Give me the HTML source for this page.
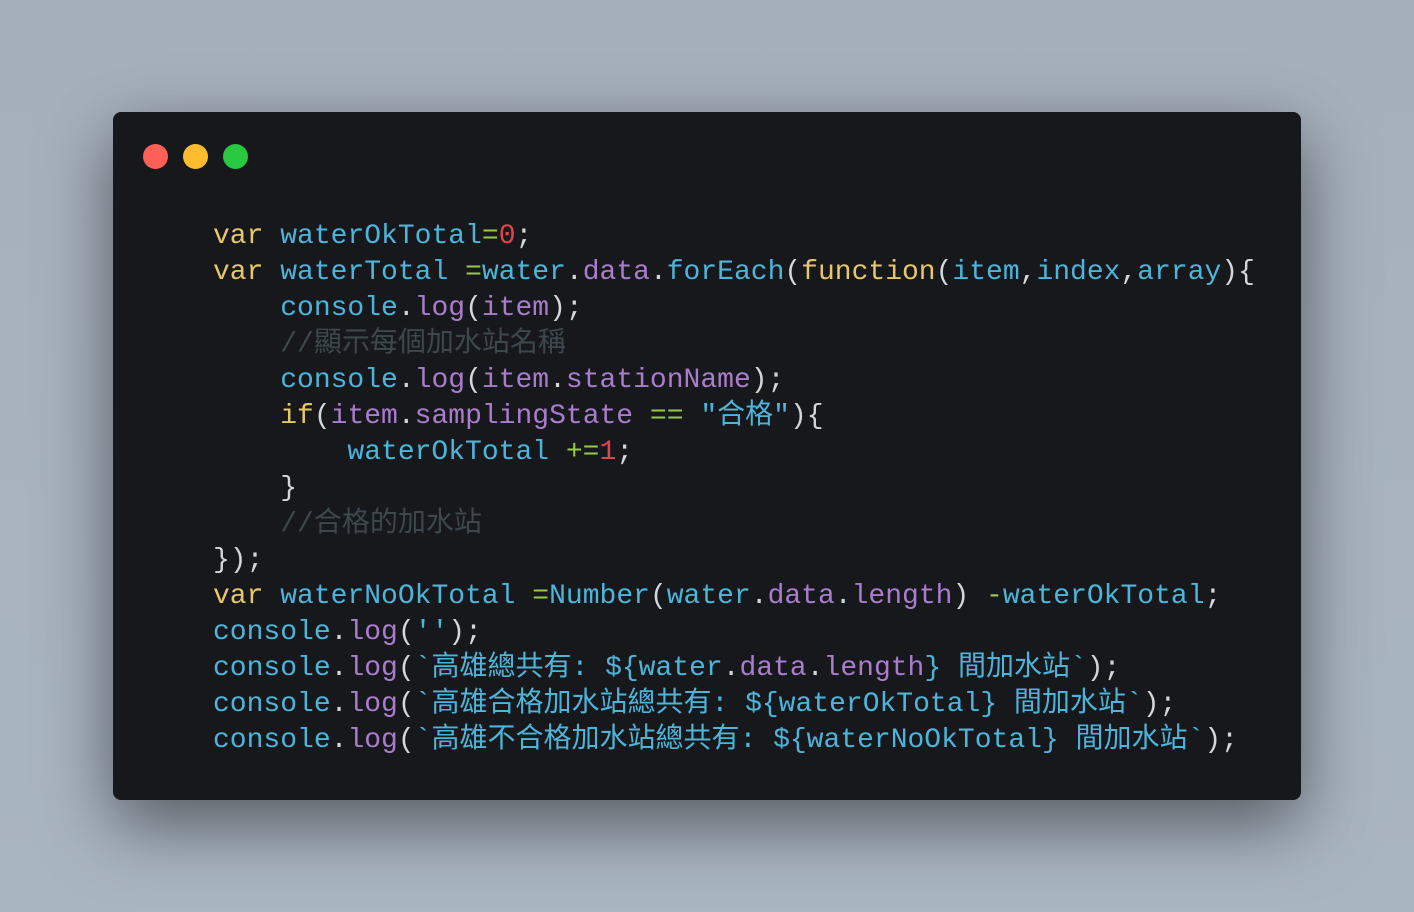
<!DOCTYPE html>
<html><head><meta charset="utf-8"><style>
html,body{margin:0;padding:0;}
body{width:1414px;height:912px;background:linear-gradient(180deg,#a6b0bc,#a9b5c1);position:relative;overflow:hidden;}
.card{position:absolute;left:113px;top:112px;width:1188px;height:688px;background:#16181b;border-radius:8px;box-shadow:0 24px 70px rgba(0,0,0,0.5);}
.dot{position:absolute;top:144px;width:25px;height:25px;border-radius:50%;}
pre{position:absolute;left:213px;top:219px;margin:0;font-family:"Liberation Mono","Noto Sans CJK TC",monospace;font-size:28px;line-height:36px;color:#d4d7da;}
.k{color:#e6c86a}.b{color:#4db5da}.p{color:#a97dcc}.g{color:#9ac94a}.r{color:#e2454d}.c{color:#3d484e}.w{color:#d4d7da}
</style></head><body>
<div class="card"></div>
<div class="dot" style="left:143px;background:#ff5f57"></div>
<div class="dot" style="left:183px;background:#febc2e"></div>
<div class="dot" style="left:223px;background:#28c840"></div>
<pre><span class="k">var</span> <span class="b">waterOkTotal</span><span class="g">=</span><span class="r">0</span>;
<span class="k">var</span> <span class="b">waterTotal</span> <span class="g">=</span><span class="b">water</span>.<span class="p">data</span>.<span class="b">forEach</span>(<span class="k">function</span>(<span class="b">item</span>,<span class="b">index</span>,<span class="b">array</span>){
    <span class="b">console</span>.<span class="p">log</span>(<span class="p">item</span>);
    <span class="c">//顯示每個加水站名稱</span>
    <span class="b">console</span>.<span class="p">log</span>(<span class="p">item</span>.<span class="p">stationName</span>);
    <span class="k">if</span>(<span class="p">item</span>.<span class="p">samplingState</span> <span class="g">==</span> <span class="b">"合格"</span>){
        <span class="b">waterOkTotal</span> <span class="g">+=</span><span class="r">1</span>;
    }
    <span class="c">//合格的加水站</span>
});
<span class="k">var</span> <span class="b">waterNoOkTotal</span> <span class="g">=</span><span class="b">Number</span>(<span class="b">water</span>.<span class="p">data</span>.<span class="p">length</span>) <span class="g">-</span><span class="b">waterOkTotal</span>;
<span class="b">console</span>.<span class="p">log</span>(<span class="b">''</span>);
<span class="b">console</span>.<span class="p">log</span>(<span class="b">`高雄總共有: ${water</span>.<span class="p">data</span>.<span class="p">length</span><span class="b">} 間加水站`</span>);
<span class="b">console</span>.<span class="p">log</span>(<span class="b">`高雄合格加水站總共有: ${waterOkTotal} 間加水站`</span>);
<span class="b">console</span>.<span class="p">log</span>(<span class="b">`高雄不合格加水站總共有: ${waterNoOkTotal} 間加水站`</span>);</pre>
</body></html>
